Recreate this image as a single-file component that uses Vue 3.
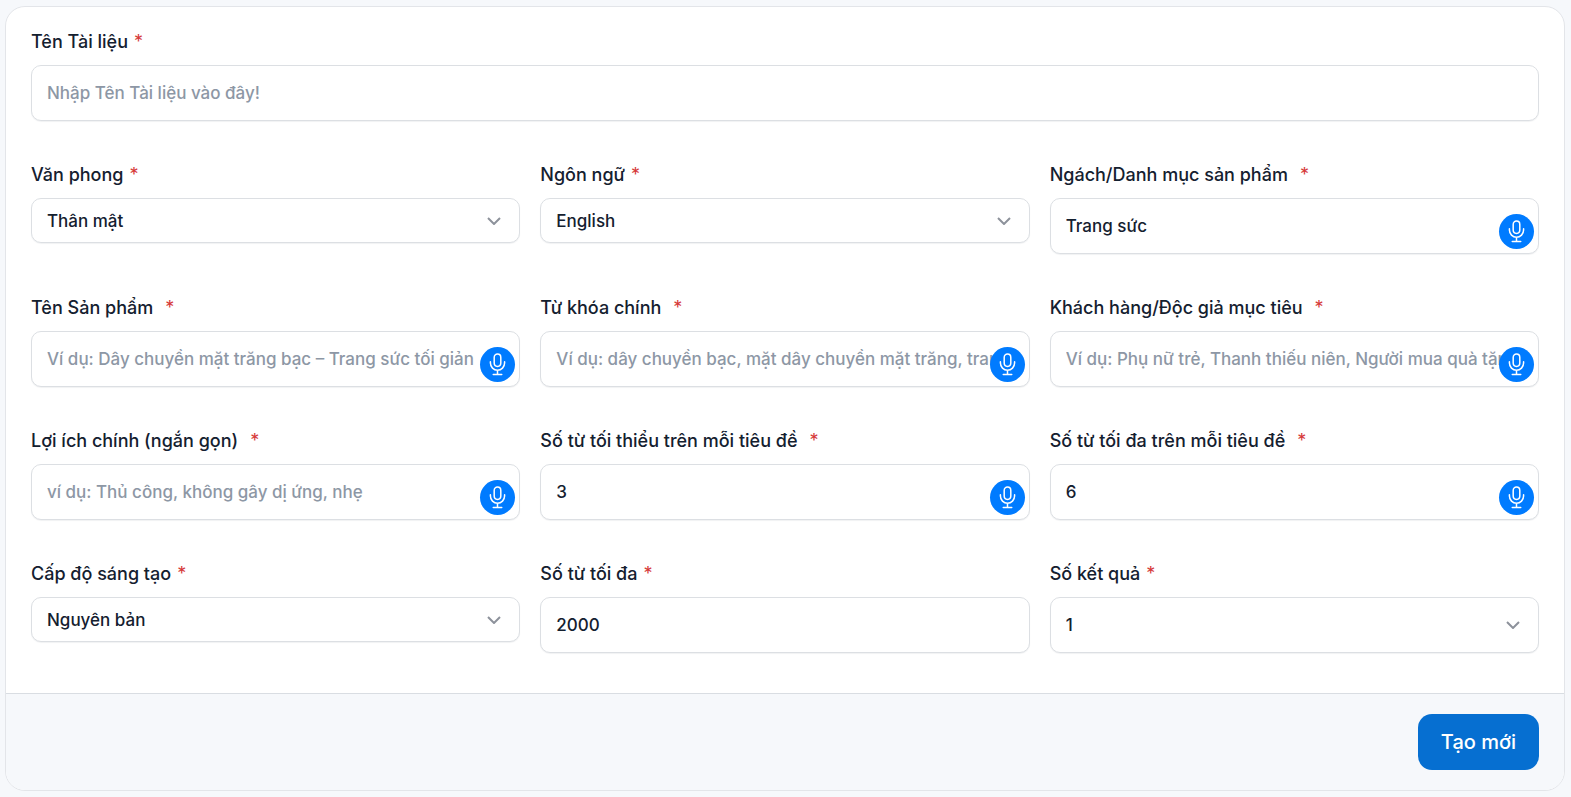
<script setup>
import { reactive } from 'vue'

const fields = reactive([
  { id: 'title', label: 'Tên Tài liệu', type: 'text', value: '', placeholder: 'Nhập Tên Tài liệu vào đây!', wide: true },
  { id: 'tone', label: 'Văn phong', type: 'select', value: 'Thân mật', compact: true },
  { id: 'language', label: 'Ngôn ngữ', type: 'select', value: 'English', compact: true },
  { id: 'niche', label: 'Ngách/Danh mục sản phẩm', type: 'text', value: 'Trang sức', mic: true },
  { id: 'product', label: 'Tên Sản phẩm', type: 'text', value: '', placeholder: 'Ví dụ: Dây chuyền mặt trăng bạc – Trang sức tối giản', mic: true },
  { id: 'keyword', label: 'Từ khóa chính', type: 'text', value: '', placeholder: 'Ví dụ: dây chuyền bạc, mặt dây chuyền mặt trăng, trang sức', mic: true },
  { id: 'audience', label: 'Khách hàng/Độc giả mục tiêu', type: 'text', value: '', placeholder: 'Ví dụ: Phụ nữ trẻ, Thanh thiếu niên, Người mua quà tặng', mic: true },
  { id: 'benefit', label: 'Lợi ích chính (ngắn gọn)', type: 'text', value: '', placeholder: 'ví dụ: Thủ công, không gây dị ứng, nhẹ', mic: true },
  { id: 'min-words', label: 'Số từ tối thiểu trên mỗi tiêu đề', type: 'text', value: '3', mic: true },
  { id: 'max-title-words', label: 'Số từ tối đa trên mỗi tiêu đề', type: 'text', value: '6', mic: true },
  { id: 'creativity', label: 'Cấp độ sáng tạo', type: 'select', value: 'Nguyên bản', compact: true },
  { id: 'max-words', label: 'Số từ tối đa', type: 'text', value: '2000' },
  { id: 'results', label: 'Số kết quả', type: 'select', value: '1' },
])
</script>

<template>
  <form class="card" @submit.prevent>
    <div class="fields">
      <div v-for="f in fields" :key="f.id" class="field" :class="{ wide: f.wide }">
        <label :for="f.id">{{ f.label }}<span class="star" :class="{ spaced: f.mic }">*</span></label>
        <div class="control">
          <template v-if="f.type === 'select'">
            <select :id="f.id" v-model="f.value" class="box" :class="{ compact: f.compact }">
              <option>{{ f.value }}</option>
            </select>
            <svg class="chevron" viewBox="0 0 14 8" aria-hidden="true"><path d="M1 1l6 6 6-6" /></svg>
          </template>
          <input v-else :id="f.id" v-model="f.value" class="box" type="text" :placeholder="f.placeholder" />
          <button v-if="f.mic" class="mic" type="button" aria-label="Microphone">
            <svg viewBox="0 0 18 24" aria-hidden="true">
              <rect x="5.5" y="1" width="7" height="13" rx="3.5" />
              <path d="M1.5 9v1.5a7.5 7.5 0 0 0 15 0V9M9 18v4.5M4.5 22.5h9" />
            </svg>
          </button>
        </div>
      </div>
    </div>
    <footer>
      <button class="submit" type="submit">Tạo mới</button>
    </footer>
  </form>
</template>

<style>
body {
  background: #f6f8fb;
}
</style>

<style scoped>
.card {
  margin: 6px 6px 6px 5px;
  border: 1px solid #e3e5e9;
  border-radius: 20px;
  overflow: hidden;
  background: #fff;
  color: #14202f;
  font-family: Inter, "Noto Sans", sans-serif;
  font-weight: 500;
}
.fields {
  display: grid;
  grid-template-columns: repeat(3, minmax(0, 1fr));
  gap: 42px 20px;
  padding: 23px 25px 40px;
}
.wide {
  grid-column: 1 / -1;
}
label {
  display: block;
  margin-bottom: 11px;
  font-size: 18px;
  line-height: 24px;
}
.star {
  margin-left: 6px;
  color: #d63939;
  font-weight: 400;
}
.star.spaced {
  margin-left: 12px;
}
.control {
  position: relative;
}
.box {
  display: block;
  box-sizing: border-box;
  width: 100%;
  height: 56px;
  margin: 0;
  padding: 0 15px;
  border: 1px solid #dcdfe3;
  border-radius: 10px;
  background: #fff;
  box-shadow: 0 1px 1px rgba(20, 32, 47, 0.06);
  color: inherit;
  font: inherit;
  font-size: 17px;
  appearance: none;
}
.box.compact {
  height: 45px;
}
.box::placeholder {
  color: #8d97a5;
  opacity: 1;
}
.chevron {
  position: absolute;
  top: 50%;
  right: 19px;
  width: 14px;
  height: 8px;
  margin-top: -4px;
  fill: none;
  stroke: #8d929b;
  stroke-width: 2;
  pointer-events: none;
}
.mic {
  position: absolute;
  right: 5px;
  bottom: 5px;
  display: grid;
  place-items: center;
  width: 35px;
  height: 35px;
  padding: 0;
  border: 0;
  border-radius: 50%;
  background: #007bff;
}
.mic svg {
  width: 17px;
  height: 23px;
  fill: none;
  stroke: #fff;
  stroke-width: 1.6;
  stroke-linecap: round;
}
footer {
  display: flex;
  justify-content: flex-end;
  padding: 20px 25px;
  border-top: 1px solid #d9dde2;
  background: #f6f8fb;
}
.submit {
  height: 56px;
  padding: 0 23px;
  border: 0;
  border-radius: 14px;
  background: #066fd1;
  color: #fff;
  font: inherit;
  font-size: 20px;
}
</style>
